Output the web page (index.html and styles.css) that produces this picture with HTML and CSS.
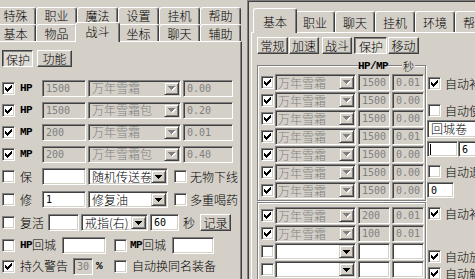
FILE: index.html
```html
<!DOCTYPE html>
<html lang="zh-CN">
<head>
<meta charset="utf-8">
<title>设置</title>
<link rel="stylesheet" href="styles.css">
</head>
<body>
<div class="screen">
  <div class="lwin">
    <div class="ltabs">
      <div class="trow t1">
        <span class="tab">特殊</span><span class="tab">职业</span><span class="tab">魔法</span><span class="tab">设置</span><span class="tab">挂机</span><span class="tab">帮助</span>
      </div>
      <div class="trow">
        <span class="tab">基本</span><span class="tab">物品</span><span class="tab sel">战斗</span><span class="tab">坐标</span><span class="tab">聊天</span><span class="tab">辅助</span>
      </div>
    </div>
    <div class="lpanel">
      <div class="btnrow">
        <span class="btn pressed w31">保护</span>
        <span class="btn w35 ml4">功能</span>
      </div>
      <div class="lrows">
        <div class="row">
          <span class="cb"><svg class="ck" width="7" height="7" viewBox="0 0 7 7"><path d="M6 0h1v1h-1zM5 1h2v1h-2zM0 2h1v1h-1zM4 2h3v1h-3zM0 3h2v1h-2zM3 3h3v1h-3zM0 4h5v1h-5zM1 5h3v1h-3zM2 6h1v1h-1z"/></svg></span>
          <span class="lbl ml5 w22 asc">HP</span>
          <span class="in dis w44">1500</span>
          <span class="combo dis w93 ml2"><span class="ct">万年雪霜</span><span class="dd"><svg width="8" height="5" viewBox="0 0 8 5"><path class="sh" d="M1 1h7v1h-1v1h-1v1h-1v1h-1v-1h-1v-1h-1v-1h-1z"/><path d="M0 0h7v1h-1v1h-1v1h-1v1h-1v-1h-1v-1h-1v-1h-1z"/></svg></span></span>
          <span class="in dis w50 ml2">0.00</span>
        </div>
        <div class="row">
          <span class="cb"><svg class="ck" width="7" height="7" viewBox="0 0 7 7"><path d="M6 0h1v1h-1zM5 1h2v1h-2zM0 2h1v1h-1zM4 2h3v1h-3zM0 3h2v1h-2zM3 3h3v1h-3zM0 4h5v1h-5zM1 5h3v1h-3zM2 6h1v1h-1z"/></svg></span>
          <span class="lbl ml5 w22 asc">HP</span>
          <span class="in dis w44">1500</span>
          <span class="combo dis w93 ml2"><span class="ct">万年雪霜包</span><span class="dd"><svg width="8" height="5" viewBox="0 0 8 5"><path class="sh" d="M1 1h7v1h-1v1h-1v1h-1v1h-1v-1h-1v-1h-1v-1h-1z"/><path d="M0 0h7v1h-1v1h-1v1h-1v1h-1v-1h-1v-1h-1v-1h-1z"/></svg></span></span>
          <span class="in dis w50 ml2">0.20</span>
        </div>
        <div class="row">
          <span class="cb"><svg class="ck" width="7" height="7" viewBox="0 0 7 7"><path d="M6 0h1v1h-1zM5 1h2v1h-2zM0 2h1v1h-1zM4 2h3v1h-3zM0 3h2v1h-2zM3 3h3v1h-3zM0 4h5v1h-5zM1 5h3v1h-3zM2 6h1v1h-1z"/></svg></span>
          <span class="lbl ml5 w22 asc">MP</span>
          <span class="in dis w44">200</span>
          <span class="combo dis w93 ml2"><span class="ct">万年雪霜</span><span class="dd"><svg width="8" height="5" viewBox="0 0 8 5"><path class="sh" d="M1 1h7v1h-1v1h-1v1h-1v1h-1v-1h-1v-1h-1v-1h-1z"/><path d="M0 0h7v1h-1v1h-1v1h-1v1h-1v-1h-1v-1h-1v-1h-1z"/></svg></span></span>
          <span class="in dis w50 ml2">0.01</span>
        </div>
        <div class="row">
          <span class="cb"><svg class="ck" width="7" height="7" viewBox="0 0 7 7"><path d="M6 0h1v1h-1zM5 1h2v1h-2zM0 2h1v1h-1zM4 2h3v1h-3zM0 3h2v1h-2zM3 3h3v1h-3zM0 4h5v1h-5zM1 5h3v1h-3zM2 6h1v1h-1z"/></svg></span>
          <span class="lbl ml5 w22 asc">MP</span>
          <span class="in dis w44">200</span>
          <span class="combo dis w93 ml2"><span class="ct">万年雪霜包</span><span class="dd"><svg width="8" height="5" viewBox="0 0 8 5"><path class="sh" d="M1 1h7v1h-1v1h-1v1h-1v1h-1v-1h-1v-1h-1v-1h-1z"/><path d="M0 0h7v1h-1v1h-1v1h-1v1h-1v-1h-1v-1h-1v-1h-1z"/></svg></span></span>
          <span class="in dis w50 ml2">0.40</span>
        </div>
        <div class="row h23">
          <span class="cb"></span>
          <span class="lbl ml5 w22">保</span>
          <span class="in w44"></span>
          <span class="combo w80 ml2"><span class="ct">随机传送卷</span><span class="dd"><svg width="7" height="4" viewBox="0 0 7 4"><path d="M0 0h7v1h-1v1h-1v1h-1v1h-1v-1h-1v-1h-1v-1h-1z"/></svg></span></span>
          <span class="cb ml6"></span>
          <span class="lbl ml3">无物下线</span>
        </div>
        <div class="row h23">
          <span class="cb"></span>
          <span class="lbl ml5 w22">修</span>
          <span class="in w44">1</span>
          <span class="combo w80 ml2"><span class="ct">修复油</span><span class="dd"><svg width="7" height="4" viewBox="0 0 7 4"><path d="M0 0h7v1h-1v1h-1v1h-1v1h-1v-1h-1v-1h-1v-1h-1z"/></svg></span></span>
          <span class="cb ml6"></span>
          <span class="lbl ml3">多重喝药</span>
        </div>
        <div class="row h23">
          <span class="cb"></span>
          <span class="lbl ml5 w28">复活</span>
          <span class="in w31"></span>
          <span class="combo w67 ml2"><span class="ct">戒指(右)</span><span class="dd"><svg width="7" height="4" viewBox="0 0 7 4"><path d="M0 0h7v1h-1v1h-1v1h-1v1h-1v-1h-1v-1h-1v-1h-1z"/></svg></span></span>
          <span class="in w29 ml2">60</span>
          <span class="lbl ml4 w12">秒</span>
          <span class="btn w31 ml5">记录</span>
        </div>
        <div class="row">
          <span class="cb"></span>
          <span class="lbl ml5 w42"><span class="asc">HP</span>回城</span>
          <span class="in w44"></span>
          <span class="cb ml8"></span>
          <span class="lbl ml3 w42"><span class="asc">MP</span>回城</span>
          <span class="in w42"></span>
        </div>
        <div class="row h20">
          <span class="cb"><svg class="ck" width="7" height="7" viewBox="0 0 7 7"><path d="M6 0h1v1h-1zM5 1h2v1h-2zM0 2h1v1h-1zM4 2h3v1h-3zM0 3h2v1h-2zM3 3h3v1h-3zM0 4h5v1h-5zM1 5h3v1h-3zM2 6h1v1h-1z"/></svg></span>
          <span class="lbl ml5 w53">持久警告</span>
          <span class="in dis w20">30</span>
          <span class="lbl ml3 w18 asc">%</span>
          <span class="cb"></span>
          <span class="lbl ml5">自动换同名装备</span>
        </div>
        <div class="row">
          <span class="cb"></span>
          <span class="lbl ml5 w133">背包满自动回城</span>
          <span class="combo w52"><span class="ct"></span><span class="dd"><svg width="7" height="4" viewBox="0 0 7 4"><path d="M0 0h7v1h-1v1h-1v1h-1v1h-1v-1h-1v-1h-1v-1h-1z"/></svg></span></span>
        </div>
      </div>
    </div>
  </div>

  <div class="rwin">
    <div class="rtabs">
      <span class="rtab sel">基本</span><span class="rtab">职业</span><span class="rtab">聊天</span><span class="rtab">挂机</span><span class="rtab">环境</span><span class="rtab">帮助</span>
    </div>
    <div class="rpanel">
      <div class="rbtnrow">
        <span class="btn w31">常规</span>
        <span class="btn w30 ml1">加速</span>
        <span class="btn w30 ml3">战斗</span>
        <span class="btn pressed w33 ml2">保护</span>
        <span class="btn w31 ml1">移动</span>
      </div>
      <div class="rbody">
        <div class="rgroups">
          <div class="grp g1">
            <span class="lgd lgd-hp">HP/MP</span>
            <span class="lgd lgd-s">秒</span>
            <div class="rrow"><span class="cb"><svg class="ck" width="7" height="7" viewBox="0 0 7 7"><path d="M6 0h1v1h-1zM5 1h2v1h-2zM0 2h1v1h-1zM4 2h3v1h-3zM0 3h2v1h-2zM3 3h3v1h-3zM0 4h5v1h-5zM1 5h3v1h-3zM2 6h1v1h-1z"/></svg></span><span class="combo dis w81 ml1 rc"><span class="ct">万年雪霜</span><span class="dd"><svg width="8" height="5" viewBox="0 0 8 5"><path class="sh" d="M1 1h7v1h-1v1h-1v1h-1v1h-1v-1h-1v-1h-1v-1h-1z"/><path d="M0 0h7v1h-1v1h-1v1h-1v1h-1v-1h-1v-1h-1v-1h-1z"/></svg></span></span><span class="in dis w32 ml2">1500</span><span class="in dis w32 ml2">0.01</span></div>
            <div class="rrow"><span class="cb"><svg class="ck" width="7" height="7" viewBox="0 0 7 7"><path d="M6 0h1v1h-1zM5 1h2v1h-2zM0 2h1v1h-1zM4 2h3v1h-3zM0 3h2v1h-2zM3 3h3v1h-3zM0 4h5v1h-5zM1 5h3v1h-3zM2 6h1v1h-1z"/></svg></span><span class="combo dis w81 ml1 rc"><span class="ct">万年雪霜</span><span class="dd"><svg width="8" height="5" viewBox="0 0 8 5"><path class="sh" d="M1 1h7v1h-1v1h-1v1h-1v1h-1v-1h-1v-1h-1v-1h-1z"/><path d="M0 0h7v1h-1v1h-1v1h-1v1h-1v-1h-1v-1h-1v-1h-1z"/></svg></span></span><span class="in dis w32 ml2">1500</span><span class="in dis w32 ml2">0.00</span></div>
            <div class="rrow"><span class="cb"><svg class="ck" width="7" height="7" viewBox="0 0 7 7"><path d="M6 0h1v1h-1zM5 1h2v1h-2zM0 2h1v1h-1zM4 2h3v1h-3zM0 3h2v1h-2zM3 3h3v1h-3zM0 4h5v1h-5zM1 5h3v1h-3zM2 6h1v1h-1z"/></svg></span><span class="combo dis w81 ml1 rc"><span class="ct">万年雪霜</span><span class="dd"><svg width="8" height="5" viewBox="0 0 8 5"><path class="sh" d="M1 1h7v1h-1v1h-1v1h-1v1h-1v-1h-1v-1h-1v-1h-1z"/><path d="M0 0h7v1h-1v1h-1v1h-1v1h-1v-1h-1v-1h-1v-1h-1z"/></svg></span></span><span class="in dis w32 ml2">1500</span><span class="in dis w32 ml2">0.00</span></div>
            <div class="rrow"><span class="cb"><svg class="ck" width="7" height="7" viewBox="0 0 7 7"><path d="M6 0h1v1h-1zM5 1h2v1h-2zM0 2h1v1h-1zM4 2h3v1h-3zM0 3h2v1h-2zM3 3h3v1h-3zM0 4h5v1h-5zM1 5h3v1h-3zM2 6h1v1h-1z"/></svg></span><span class="combo dis w81 ml1 rc"><span class="ct">万年雪霜</span><span class="dd"><svg width="8" height="5" viewBox="0 0 8 5"><path class="sh" d="M1 1h7v1h-1v1h-1v1h-1v1h-1v-1h-1v-1h-1v-1h-1z"/><path d="M0 0h7v1h-1v1h-1v1h-1v1h-1v-1h-1v-1h-1v-1h-1z"/></svg></span></span><span class="in dis w32 ml2">1500</span><span class="in dis w32 ml2">0.01</span></div>
            <div class="rrow"><span class="cb"><svg class="ck" width="7" height="7" viewBox="0 0 7 7"><path d="M6 0h1v1h-1zM5 1h2v1h-2zM0 2h1v1h-1zM4 2h3v1h-3zM0 3h2v1h-2zM3 3h3v1h-3zM0 4h5v1h-5zM1 5h3v1h-3zM2 6h1v1h-1z"/></svg></span><span class="combo dis w81 ml1 rc"><span class="ct">万年雪霜</span><span class="dd"><svg width="8" height="5" viewBox="0 0 8 5"><path class="sh" d="M1 1h7v1h-1v1h-1v1h-1v1h-1v-1h-1v-1h-1v-1h-1z"/><path d="M0 0h7v1h-1v1h-1v1h-1v1h-1v-1h-1v-1h-1v-1h-1z"/></svg></span></span><span class="in dis w32 ml2">1500</span><span class="in dis w32 ml2">0.00</span></div>
            <div class="rrow"><span class="cb"><svg class="ck" width="7" height="7" viewBox="0 0 7 7"><path d="M6 0h1v1h-1zM5 1h2v1h-2zM0 2h1v1h-1zM4 2h3v1h-3zM0 3h2v1h-2zM3 3h3v1h-3zM0 4h5v1h-5zM1 5h3v1h-3zM2 6h1v1h-1z"/></svg></span><span class="combo dis w81 ml1 rc"><span class="ct">万年雪霜</span><span class="dd"><svg width="8" height="5" viewBox="0 0 8 5"><path class="sh" d="M1 1h7v1h-1v1h-1v1h-1v1h-1v-1h-1v-1h-1v-1h-1z"/><path d="M0 0h7v1h-1v1h-1v1h-1v1h-1v-1h-1v-1h-1v-1h-1z"/></svg></span></span><span class="in dis w32 ml2">1500</span><span class="in dis w32 ml2">0.00</span></div>
            <div class="rrow"><span class="cb"><svg class="ck" width="7" height="7" viewBox="0 0 7 7"><path d="M6 0h1v1h-1zM5 1h2v1h-2zM0 2h1v1h-1zM4 2h3v1h-3zM0 3h2v1h-2zM3 3h3v1h-3zM0 4h5v1h-5zM1 5h3v1h-3zM2 6h1v1h-1z"/></svg></span><span class="combo dis w81 ml1 rc"><span class="ct">万年雪霜</span><span class="dd"><svg width="8" height="5" viewBox="0 0 8 5"><path class="sh" d="M1 1h7v1h-1v1h-1v1h-1v1h-1v-1h-1v-1h-1v-1h-1z"/><path d="M0 0h7v1h-1v1h-1v1h-1v1h-1v-1h-1v-1h-1v-1h-1z"/></svg></span></span><span class="in dis w32 ml2">1500</span><span class="in dis w32 ml2">0.00</span></div>
          </div>
          <div class="grp g2">
            <div class="rrow"><span class="cb"><svg class="ck" width="7" height="7" viewBox="0 0 7 7"><path d="M6 0h1v1h-1zM5 1h2v1h-2zM0 2h1v1h-1zM4 2h3v1h-3zM0 3h2v1h-2zM3 3h3v1h-3zM0 4h5v1h-5zM1 5h3v1h-3zM2 6h1v1h-1z"/></svg></span><span class="combo dis w81 ml1 rc"><span class="ct">万年雪霜</span><span class="dd"><svg width="8" height="5" viewBox="0 0 8 5"><path class="sh" d="M1 1h7v1h-1v1h-1v1h-1v1h-1v-1h-1v-1h-1v-1h-1z"/><path d="M0 0h7v1h-1v1h-1v1h-1v1h-1v-1h-1v-1h-1v-1h-1z"/></svg></span></span><span class="in dis w32 ml2">200</span><span class="in dis w32 ml2">0.01</span></div>
            <div class="rrow"><span class="cb"><svg class="ck" width="7" height="7" viewBox="0 0 7 7"><path d="M6 0h1v1h-1zM5 1h2v1h-2zM0 2h1v1h-1zM4 2h3v1h-3zM0 3h2v1h-2zM3 3h3v1h-3zM0 4h5v1h-5zM1 5h3v1h-3zM2 6h1v1h-1z"/></svg></span><span class="combo dis w81 ml1 rc"><span class="ct">万年雪霜</span><span class="dd"><svg width="8" height="5" viewBox="0 0 8 5"><path class="sh" d="M1 1h7v1h-1v1h-1v1h-1v1h-1v-1h-1v-1h-1v-1h-1z"/><path d="M0 0h7v1h-1v1h-1v1h-1v1h-1v-1h-1v-1h-1v-1h-1z"/></svg></span></span><span class="in dis w32 ml2">100</span><span class="in dis w32 ml2">0.01</span></div>
            <div class="rrow"><span class="cb"></span><span class="combo w81 ml1 rc"><span class="ct"></span><span class="dd"><svg width="7" height="4" viewBox="0 0 7 4"><path d="M0 0h7v1h-1v1h-1v1h-1v1h-1v-1h-1v-1h-1v-1h-1z"/></svg></span></span><span class="in w32 ml2"></span><span class="in w32 ml2"></span></div>
            <div class="rrow"><span class="cb"></span><span class="combo w81 ml1 rc"><span class="ct"></span><span class="dd"><svg width="7" height="4" viewBox="0 0 7 4"><path d="M0 0h7v1h-1v1h-1v1h-1v1h-1v-1h-1v-1h-1v-1h-1z"/></svg></span></span><span class="in w32 ml2"></span><span class="in w32 ml2"></span></div>
          </div>
        </div>
        <div class="rcol">
          <div class="ckrow mt12"><span class="cb"><svg class="ck" width="7" height="7" viewBox="0 0 7 7"><path d="M6 0h1v1h-1zM5 1h2v1h-2zM0 2h1v1h-1zM4 2h3v1h-3zM0 3h2v1h-2zM3 3h3v1h-3zM0 4h5v1h-5zM1 5h3v1h-3zM2 6h1v1h-1z"/></svg></span><span class="cktext">自动补血</span></div>
          <div class="ckrow mt14"><span class="cb"></span><span class="cktext">自动使用</span></div>
          <span class="combo w66 h18 mt3"><span class="ct">回城卷</span><span class="dd"><svg width="7" height="4" viewBox="0 0 7 4"><path d="M0 0h7v1h-1v1h-1v1h-1v1h-1v-1h-1v-1h-1v-1h-1z"/></svg></span></span>
          <div class="inrow mt3"><span class="in w31 h16"><span class="caret"></span></span><span class="in w30 h16">6</span></div>
          <div class="ckrow mt8"><span class="cb"></span><span class="cktext">自动退出</span></div>
          <span class="in w27 h16 mt4">0</span>
          <div class="ckrow mt9"><span class="cb"><svg class="ck" width="7" height="7" viewBox="0 0 7 7"><path d="M6 0h1v1h-1zM5 1h2v1h-2zM0 2h1v1h-1zM4 2h3v1h-3zM0 3h2v1h-2zM3 3h3v1h-3zM0 4h5v1h-5zM1 5h3v1h-3zM2 6h1v1h-1z"/></svg></span><span class="cktext">自动补魔</span></div>
          <div class="ckrow mt30"><span class="cb"><svg class="ck" width="7" height="7" viewBox="0 0 7 7"><path d="M6 0h1v1h-1zM5 1h2v1h-2zM0 2h1v1h-1zM4 2h3v1h-3zM0 3h2v1h-2zM3 3h3v1h-3zM0 4h5v1h-5zM1 5h3v1h-3zM2 6h1v1h-1z"/></svg></span><span class="cktext">自动放魔</span></div>
          <div class="ckrow mt4"><span class="cb"><svg class="ck" width="7" height="7" viewBox="0 0 7 7"><path d="M6 0h1v1h-1zM5 1h2v1h-2zM0 2h1v1h-1zM4 2h3v1h-3zM0 3h2v1h-2zM3 3h3v1h-3zM0 4h5v1h-5zM1 5h3v1h-3zM2 6h1v1h-1z"/></svg></span><span class="cktext">自动解毒</span></div>
        </div>
      </div>
    </div>
  </div>
</div>
</body>
</html>
```

FILE: styles.css
```css
* { box-sizing: border-box; margin: 0; padding: 0; }
html, body { width: 475px; height: 279px; overflow: hidden; }
body {
  background: #d4d0c8;
  font-family: "Noto Sans CJK SC", "Noto Sans", sans-serif;
  font-size: 12px;
  font-weight: 300;
  line-height: 12px;
  color: #000;
}
.screen { display: flex; width: 475px; height: 279px; overflow: hidden; }

/* ---------- left window ---------- */
.lwin { width: 242px; flex: none; }
.ltabs { padding-top: 7px; }
.trow { display: flex; align-items: flex-end; height: 17px; margin-left: -5px; }
.tab {
  flex: none; width: 41px; height: 17px;
  display: flex; align-items: center; justify-content: center;
  padding-top: 1px;
  border: 1px solid #fff; border-right-color: #404040; border-bottom: none;
  border-radius: 3px 3px 0 0;
  box-shadow: inset -1px 0 #808080;
  background: #d4d0c8;
}
.t1 .tab { padding-top: 0; padding-bottom: 1px; }
.tab.sel {
  width: 45px; height: 20px; margin: 0 -2px -1px;
  padding-top: 1px; padding-bottom: 2px;
  position: relative; z-index: 2;
}
.lpanel {
  height: 238px;
  border-top: 1px solid #fff;
  border-right: 1px solid #404040;
  box-shadow: inset -1px 0 #808080;
}
.btnrow { display: flex; margin-top: 8px; padding-left: 2px; }
.lrows { margin-top: 10px; }
.row { display: flex; align-items: center; height: 22px; padding-left: 2px; }
.row.h23 { height: 23px; }
.row.h20 { height: 20px; }
.row > *, .rrow > *, .ckrow > *, .inrow > *, .rbtnrow > *, .btnrow > * { flex: none; }

.lbl { white-space: nowrap; display: flex; align-items: center; height: 17px; }
.asc { font-family: "Liberation Mono", monospace; font-weight: bold; font-size: 11px; letter-spacing: -0.6px; }

/* ---------- controls ---------- */
.btn {
  height: 17px;
  display: flex; align-items: center; justify-content: center;
  border: 1px solid; border-color: #fff #404040 #404040 #fff;
  box-shadow: inset -1px -1px #808080;
  background: #d4d0c8;
  padding-top: 1px;
}
.btn.pressed {
  border-color: #404040 #fff #fff #404040;
  box-shadow: inset 1px 1px #808080;
  background: #dedbd5;
  padding-top: 2px; padding-left: 1px;
}
.cb {
  width: 13px; height: 13px;
  border: 1px solid; border-color: #808080 #fff #fff #808080;
  box-shadow: inset 1px 1px #404040, inset -1px -1px #d4d0c8;
  background: #fff;
  display: flex; align-items: center; justify-content: center;
}
.ck { display: block; fill: #000; }
.in {
  height: 17px;
  border: 1px solid; border-color: #808080 #fff #fff #808080;
  box-shadow: inset 1px 1px #404040, inset -1px -1px #d4d0c8;
  background: #fff;
  padding: 0 2px 0 3px;
  display: flex; align-items: center;
  font-family: "DejaVu Sans Mono", monospace; font-size: 10px; font-weight: normal; line-height: 11px;
  white-space: nowrap;
}
.in.dis { background: #d4d0c8; color: #808080; }
.in.h16 { height: 16px; }
.caret { width: 1px; height: 11px; background: #000; margin-left: -1px; }
.combo {
  height: 17px;
  display: flex;
  border: 1px solid; border-color: #808080 #fff #fff #808080;
  box-shadow: inset 1px 1px #404040, inset -1px -1px #d4d0c8;
  background: #fff;
  padding: 1px;
}
.combo.dis { background: #d4d0c8; color: #808080; }
.combo.h18 { height: 18px; }
.ct { flex: 1; min-width: 0; white-space: nowrap; padding-left: 2px; display: flex; align-items: center; line-height: 12px; }
.rc .ct { padding-left: 1px; }
.dd {
  flex: none; width: 15px; height: 100%;
  border: 1px solid; border-color: #d4d0c8 #404040 #404040 #d4d0c8;
  box-shadow: inset 1px 1px #fff, inset -1px -1px #808080;
  background: #d4d0c8;
  display: flex; align-items: center; justify-content: center;
  position: relative; z-index: 1;
}
.dd svg { display: block; fill: #000; }
.combo.dis .dd svg path { fill: #808080; }
.combo.dis .dd svg path.sh { fill: #fff; }

/* ---------- sizes / spacing ---------- */
.w12 { width: 12px; } .w18 { width: 18px; } .w20 { width: 20px; } .w22 { width: 22px; }
.w27 { width: 27px; } .w28 { width: 28px; } .w29 { width: 29px; } .w30 { width: 30px; }
.w31 { width: 31px; } .w32 { width: 32px; } .w33 { width: 33px; } .w35 { width: 35px; }
.w42 { width: 42px; } .w44 { width: 44px; } .w50 { width: 50px; } .w52 { width: 52px; }
.w53 { width: 53px; } .w66 { width: 66px; } .w67 { width: 67px; } .w80 { width: 80px; }
.w81 { width: 81px; } .w93 { width: 93px; } .w133 { width: 133px; }
.ml1 { margin-left: 1px; } .ml2 { margin-left: 2px; } .ml3 { margin-left: 3px; }
.ml4 { margin-left: 4px; } .ml5 { margin-left: 5px; } .ml6 { margin-left: 6px; }
.ml8 { margin-left: 8px; }
.mt2 { margin-top: 2px; } .mt3 { margin-top: 3px; } .mt4 { margin-top: 4px; }
.mt8 { margin-top: 8px; } .mt9 { margin-top: 9px; } .mt12 { margin-top: 12px; }
.mt14 { margin-top: 14px; } .mt30 { margin-top: 30px; }

/* ---------- right window ---------- */
.rwin {
  flex: none; width: 228px; height: 279px; margin-left: 5px;
  border-top: 1px solid #808080; border-left: 1px solid #808080;
  box-shadow: inset 1px 1px #404040;
  padding: 1px 0 0 1px;
  overflow: hidden;
}
.rtabs { display: flex; align-items: flex-end; height: 30px; padding-left: 6px; }
.rtab {
  flex: none; width: 40px; height: 21px;
  display: flex; align-items: center; justify-content: center;
  padding-top: 2px;
  border: 1px solid #fff; border-right-color: #404040; border-bottom: none;
  border-radius: 3px 3px 0 0;
  box-shadow: inset -1px 0 #808080;
  background: #d4d0c8;
}
.rtab.sel {
  width: 44px; height: 25px; margin: 0 -2px -1px;
  padding-top: 2px; padding-bottom: 0;
  position: relative; z-index: 2;
}
.rpanel { margin-left: 2px; height: 260px; border-top: 1px solid #fff; border-left: 1px solid #fff; }
.rbtnrow { display: flex; margin-top: 4px; padding-left: 5px; }
.rbody { display: flex; align-items: flex-start; margin-top: 11px; padding-left: 5px; }
.rgroups { flex: none; width: 169px; }
.grp {
  width: 169px;
  border: 1px solid #808080;
  box-shadow: inset 1px 1px #fff, 1px 1px #fff;
  position: relative;
  padding: 8px 0 0 3px;
}
.g2 { margin-top: 1px; padding-top: 4px; }
.lgd {
  position: absolute; top: -5px;
  background: #d4d0c8;
  line-height: 10px; height: 10px;
}
.lgd-hp { left: 100px; font-family: "Liberation Mono", monospace; font-weight: bold; font-size: 11px; letter-spacing: -0.6px; }
.lgd-s { left: 144px; font-size: 11px; padding: 0 1px; }
.rrow { display: flex; align-items: center; height: 17px; margin-bottom: 1px; }
.rcol { flex: none; width: 49px; margin-left: 1px; display: flex; flex-direction: column; align-items: flex-start; }
.ckrow { display: flex; align-items: center; height: 13px; padding-left: 1px; line-height: 12px; }
.cktext { margin-left: 4px; white-space: nowrap; }
.inrow { display: flex; }
```
